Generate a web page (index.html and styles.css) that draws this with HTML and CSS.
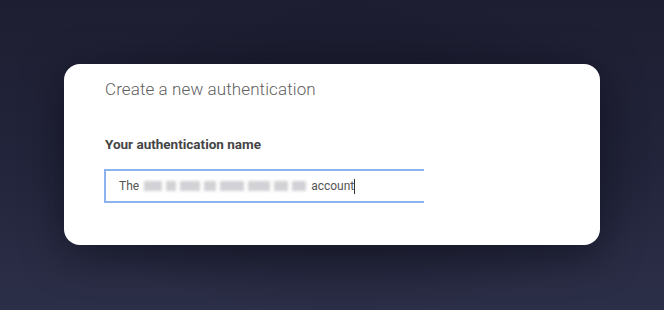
FILE: index.html
```html
<!DOCTYPE html>
<html lang="en">
<head>
    <meta charset="UTF-8">
    <title>Create a new authentication</title>
    <link rel="stylesheet" href="styles.css">
</head>
<body>
    <div class="modal">
        <h1 class="modal-title">Create a new authentication</h1>
        <label class="field-label" for="auth-name">Your authentication name</label>
        <div class="field-input">
            <span>The</span>
            <span class="redacted">
                <i style="width: 18px"></i><i style="width: 10px"></i>
                <i style="width: 20px"></i><i style="width: 12px"></i>
                <i style="width: 24px"></i><i style="width: 22px"></i>
                <i style="width: 14px"></i><i style="width: 14px"></i>
            </span>
            <span>account</span><span class="caret"></span>
        </div>
    </div>
</body>
</html>
```

FILE: styles.css
```css
* {
    margin: 0;
    padding: 0;
    box-sizing: border-box;
}

body {
    font-family: Roboto, 'Liberation Sans', sans-serif;
    width: 664px;
    height: 310px;
    overflow: hidden;
    padding: 64px 64px 0;
    background:
        radial-gradient(ellipse 70% 75% at 52% 50%, rgba(12, 12, 24, 0.5), rgba(12, 12, 24, 0) 70%),
        linear-gradient(180deg, #1d1e31 0%, #23253c 55%, #2c2f48 100%);
}

.modal {
    width: 536px;
    height: 181px;
    background: #ffffff;
    border-radius: 16px;
    padding: 15px 40px 0 41px;
    box-shadow: 0 10px 40px rgba(8, 8, 18, 0.5);
}

.modal-title {
    font-size: 17px;
    font-weight: 300;
    line-height: 20px;
    color: #5f5f5f;
    letter-spacing: 0.1px;
}

.field-label {
    display: block;
    margin-top: 37px;
    font-size: 13.5px;
    font-weight: 700;
    line-height: 16px;
    color: #454545;
}

.field-input {
    display: flex;
    align-items: center;
    width: 320px;
    height: 34px;
    margin-top: 17px;
    margin-left: -1px;
    padding-left: 13px;
    border: 2px solid #8cb2f0;
    border-right: none;
    font-size: 12px;
    color: #555555;
}

.redacted {
    display: flex;
    gap: 4px;
    margin: 0 5px 0 5px;
    filter: blur(1.4px);
}

.redacted i {
    display: block;
    height: 10px;
    background: #d2d2d6;
}

.caret {
    width: 1px;
    height: 15px;
    background: #333333;
}
```
